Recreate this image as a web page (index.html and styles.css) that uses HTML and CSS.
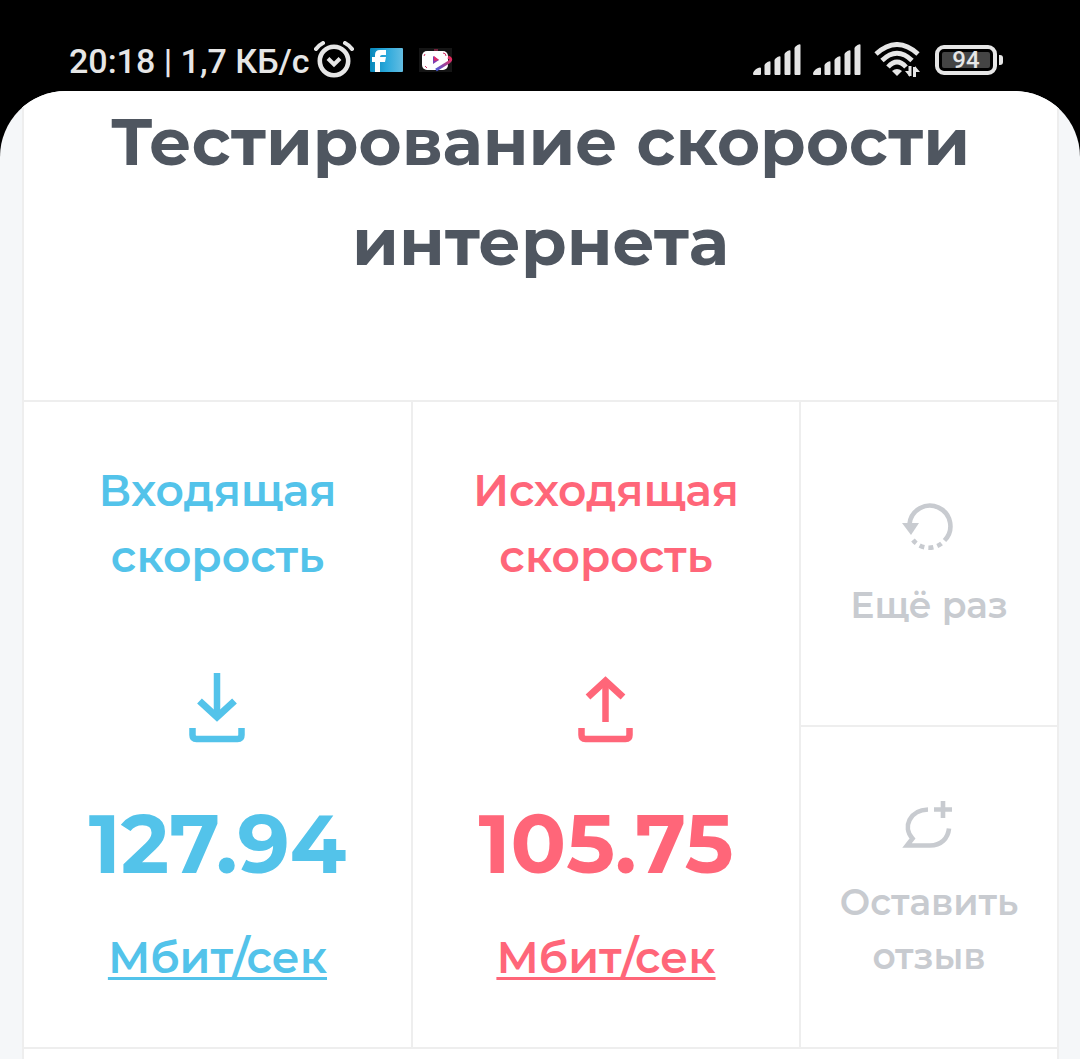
FILE: index.html
```html
<!DOCTYPE html>
<html lang="ru">
<head>
<meta charset="utf-8">
<meta name="viewport" content="width=device-width, initial-scale=1">
<title>Тестирование скорости интернета</title>
<link rel="stylesheet" href="styles.css">
</head>
<body>
<header class="status">
  <span class="status-text">20:18 | 1,7 КБ/с</span>
  <svg class="alarm" width="40" height="38" viewBox="0 0 40 38" fill="none" stroke="#e6e6e6" stroke-linecap="round" aria-hidden="true">
    <circle cx="20" cy="20" r="14.2" stroke-width="4.6"/>
    <path d="M14 17.500l6 6 6-6" stroke-width="4" stroke-linecap="butt"/>
    <path d="M2 8q3-4 7-6M38 8q-3-4-7-6" stroke-width="4"/>
  </svg>
  <svg class="app" width="33" height="24" viewBox="0 0 33 24" aria-hidden="true">
    <defs><linearGradient id="sky"><stop offset="0" stop-color="#0787b9"/><stop offset=".5" stop-color="#2ba9dc"/><stop offset="1" stop-color="#64bde2"/></linearGradient></defs>
    <rect width="33" height="24" rx="1" fill="url(#sky)"/>
    <path d="M5 24V14H2V9h3V7q0-5 5-5h6v5h-4q-2 0-2 2h6l-1 5h-5v10z" fill="#fff"/>
  </svg>
  <svg class="app" width="34" height="26" viewBox="0 0 34 26" aria-hidden="true">
    <defs><linearGradient id="swoosh" x1="1" y1="0" x2="0" y2="1"><stop offset="0" stop-color="#ee2859"/><stop offset="1" stop-color="#495cdb"/></linearGradient></defs>
    <rect y="1" width="33" height="24" fill="#151515"/>
    <rect x="3" y="4" width="26" height="19" rx="5" fill="#fff"/>
    <path d="M14 9v8l6-4z" fill="#7b3cb2"/><path d="M15 9l5 4-5 1z" fill="#df2c67"/>
    <path d="M15 3h4M6 7l-1 2M24 6q3 0 3 3M6 19l2 2" fill="none" stroke="#d42e65"/>
    <path d="M29 10q5 2 1 5l-13 8" fill="none" stroke="url(#swoosh)" stroke-width="3"/>
  </svg>
  <svg class="signal first" width="49" height="32" viewBox="0 0 49 32" fill="#e6e6e6" aria-hidden="true"><path id="bars" d="M0 30q0-3 4-5.500 4-2 4 0V30q0 1-1 1H1q-1 0-1-1zM11.500 30v-9q0-1 3-3 3-1.500 3 0v12q0 1-1 1h-4q-1 0-1-1zM21.500 30V16q0-1 3-3 3-1.500 3 0v17q0 1-1 1h-4q-1 0-1-1zM31.500 30V10q0-1 3-3 3-1.500 3 0v23q0 1-1 1h-4q-1 0-1-1zM41.500 30V4q0-1 3-3 3-1.500 3 0v29q0 1-1 1h-4q-1 0-1-1z"/></svg>
  <svg class="signal" width="49" height="32" viewBox="0 0 49 32" fill="#e6e6e6" aria-hidden="true"><use href="#bars"/></svg>
  <svg class="wifi" width="47" height="36" viewBox="0 0 47 36" fill="none" stroke="#e6e6e6" stroke-width="4.8" aria-hidden="true">
    <path d="M2 12Q23-7 44 12M8 18.500Q23 4 38 18.500M14 25Q23 15 32 25"/>
    <path d="M18 29q5-4 10 0l-5 5z" fill="#e6e6e6" stroke="none"/>
    <path d="M36 24v10M40.500 35V25" stroke-width="3"/><path d="M31 29h5v6zM46 30h-5v-6z" fill="#e6e6e6" stroke="none"/>
  </svg>
  <div class="battery"><span class="charge">94</span></div>
</header>

<main class="page">
  <section class="panel">
    <h1 class="title">Тестирование скорости интернета</h1>
    <div class="results">
      <article class="metric incoming">
        <h2 class="label">Входящая скорость</h2>
        <svg class="arrow" width="56" height="72" viewBox="0 0 56 72" fill="none" stroke="currentColor" aria-hidden="true">
          <path d="M28 1v45" stroke-width="6.500"/><path d="M10.500 29L28 45l17.500-16" stroke-width="7"/>
          <path d="M3.500 56v7q0 4 4 4h41q4 0 4-4v-7" stroke-width="6.500"/>
        </svg>
        <strong class="value">127.94</strong>
        <a class="unit" href="#units">Мбит/сек</a>
      </article>
      <article class="metric outgoing">
        <h2 class="label">Исходящая скорость</h2>
        <svg class="arrow" width="56" height="72" viewBox="0 0 56 72" fill="none" stroke="currentColor" aria-hidden="true">
          <path d="M27.500 50V9" stroke-width="6.500"/><path d="M10 25L27.500 9 45 25" stroke-width="7"/>
          <path d="M3.500 56v7q0 4 4 4h40q4 0 4-4v-7" stroke-width="6.500"/>
        </svg>
        <strong class="value">105.75</strong>
        <a class="unit" href="#units">Мбит/сек</a>
      </article>
      <div class="actions">
        <button class="action" type="button">
          <svg width="54" height="50" viewBox="0 0 54 50" fill="none" stroke="currentColor" stroke-width="4.600" aria-hidden="true">
            <path d="M7.500 22a20.500 20.500 0 1 1 35 16.500"/>
            <path d="M39.500 41.500A20.500 20.500 0 0 1 11 38" stroke-dasharray="5 4"/>
            <path d="M0 21h17l-8 12z" fill="currentColor" stroke="none"/>
          </svg>
          <span>Ещё раз</span>
        </button>
        <button class="action" type="button">
          <svg width="54" height="50" viewBox="0 0 54 50" fill="none" stroke="currentColor" stroke-width="4.600" aria-hidden="true">
            <path d="M26 10.500C8 11 0 28 10.500 39.500L5 46.500h23c11 0 18-7 19-17"/>
            <path d="M32 10.500h18M41 2v17"/>
          </svg>
          <span>Оставить отзыв</span>
        </button>
      </div>
    </div>
  </section>
</main>
</body>
</html>
```
FILE: styles.css
```css
* { box-sizing: border-box; }

body {
  margin: 0;
  min-height: 100vh;
  display: flex;
  flex-direction: column;
  background: #000;
  font-family: Montserrat, Inter, sans-serif;
}

.status {
  display: flex;
  align-items: center;
  height: 91px;
  padding: 28px 83px 0 69px;
  color: #e6e6e6;
  font-family: Roboto, sans-serif;
  font-weight: 500;
}

.status-text {
  padding-top: 2px;
  font-size: 34px;
  line-height: 40px;
  white-space: nowrap;
}

.alarm { margin-left: 4px; }
.app { margin-left: 16px; }
.signal { margin-left: 11px; }
.signal.first { margin-left: auto; }
.wifi { margin-left: 12px; }

.battery {
  position: relative;
  width: 62px;
  height: 30px;
  margin-left: 14px;
  padding: 3px;
  border: 4px solid #e6e6e6;
  border-radius: 9px;
}

.battery::after {
  content: "";
  position: absolute;
  top: 6px;
  right: -10px;
  width: 4px;
  height: 10px;
  border-radius: 0 3px 3px 0;
  background: #e6e6e6;
}

.charge {
  display: block;
  border-radius: 2px;
  background: #444;
  font-size: 24px;
  line-height: 16px;
  text-align: center;
}

.page {
  flex: 1;
  display: flex;
  padding: 0 21px 0 22px;
  border-radius: 66px 66px 0 0;
  background: #f5f7f9;
  overflow: hidden;
}

.panel {
  flex: 1;
  border: solid #eee;
  border-width: 0 2px;
  background: #fff;
}

.title {
  margin: 0;
  padding: 1px 60px 108px;
  color: #4f5660;
  font-size: 66px;
  line-height: 100px;
  font-weight: 700;
  text-align: center;
}

.results {
  display: grid;
  grid-template-columns: 3fr 3fr 2fr;
  border: solid #eee;
  border-width: 2px 0;
}

.metric {
  display: flex;
  flex-direction: column;
  align-items: center;
  padding: 55px 60px 57px;
  text-align: center;
}

.incoming { color: #53c3ea; }
.outgoing { color: #ff6679; border-left: 2px solid #eee; }

.label {
  margin: 0 0 83px;
  font-size: 44px;
  line-height: 66px;
  font-weight: 600;
}

.value {
  margin-top: 50px;
  font-size: 82px;
  line-height: 100px;
  font-weight: 700;
}

.unit {
  margin-top: 30px;
  color: inherit;
  font-size: 44px;
  line-height: 66px;
  font-weight: 600;
  text-decoration-thickness: 3px;
  text-underline-offset: 4px;
}

.actions {
  display: grid;
  grid-template-rows: 1fr 1fr;
  border-left: 2px solid #eee;
}

.action {
  display: flex;
  flex-direction: column;
  align-items: center;
  justify-content: center;
  gap: 26px;
  padding: 8px 30px 0;
  border: 0;
  background: none;
  color: #c8cbd0;
  font-family: inherit;
  font-size: 36px;
  line-height: 54px;
  font-weight: 600;
}

.action + .action { border-top: 2px solid #eee; }
```
